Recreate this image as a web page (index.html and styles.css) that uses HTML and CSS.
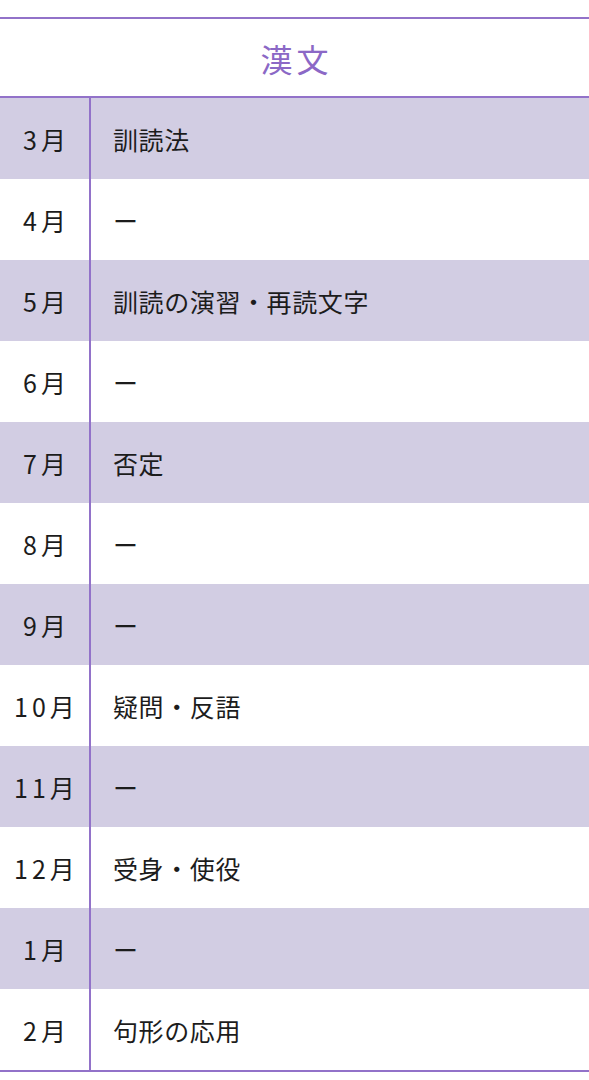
FILE: index.html
```html
<!DOCTYPE html>
<html lang="ja">
<head>
<meta charset="utf-8">
<link rel="stylesheet" href="styles.css">
</head>
<body>
<div class="table">
  <div class="head">漢文</div>
  <div class="row alt"><div class="m">3月</div><div class="c">訓読法</div></div>
  <div class="row"><div class="m">4月</div><div class="c">ー</div></div>
  <div class="row alt"><div class="m">5月</div><div class="c">訓読の演習・再読文字</div></div>
  <div class="row"><div class="m">6月</div><div class="c">ー</div></div>
  <div class="row alt"><div class="m">7月</div><div class="c">否定</div></div>
  <div class="row"><div class="m">8月</div><div class="c">ー</div></div>
  <div class="row alt"><div class="m">9月</div><div class="c">ー</div></div>
  <div class="row"><div class="m">10月</div><div class="c">疑問・反語</div></div>
  <div class="row alt"><div class="m">11月</div><div class="c">ー</div></div>
  <div class="row"><div class="m">12月</div><div class="c">受身・使役</div></div>
  <div class="row alt"><div class="m">1月</div><div class="c">ー</div></div>
  <div class="row"><div class="m">2月</div><div class="c">句形の応用</div></div>
</div>
</body>
</html>
```
FILE: styles.css
```css
html, body {
  margin: 0;
  padding: 0;
  background: #fff;
}
body {
  padding-top: 17px;
  font-family: "Noto Sans CJK JP", "Noto Sans", sans-serif;
  color: #1c1c1c;
}
.table {
  border-top: 2px solid #9272c9;
  border-bottom: 2px solid #9272c9;
}
.head {
  height: 77px;
  display: flex;
  align-items: center;
  justify-content: center;
  font-family: "Liberation Serif", "Noto Sans CJK JP", serif;
  font-size: 32px;
  letter-spacing: 4px;
  padding-left: 4px;
  color: #8b68c6;
  border-bottom: 2px solid #9272c9;
}
.row {
  display: grid;
  grid-template-columns: 91px 1fr;
  height: 81px;
}
.row.alt {
  background: #d2cde3;
}
.m {
  border-right: 2px solid #9272c9;
  display: flex;
  align-items: center;
  justify-content: center;
  font-size: 25px;
  letter-spacing: 4px;
  padding-left: 4px;
}
.c {
  display: flex;
  align-items: center;
  padding-left: 22px;
  font-size: 25px;
  letter-spacing: 0.6px;
}
```
